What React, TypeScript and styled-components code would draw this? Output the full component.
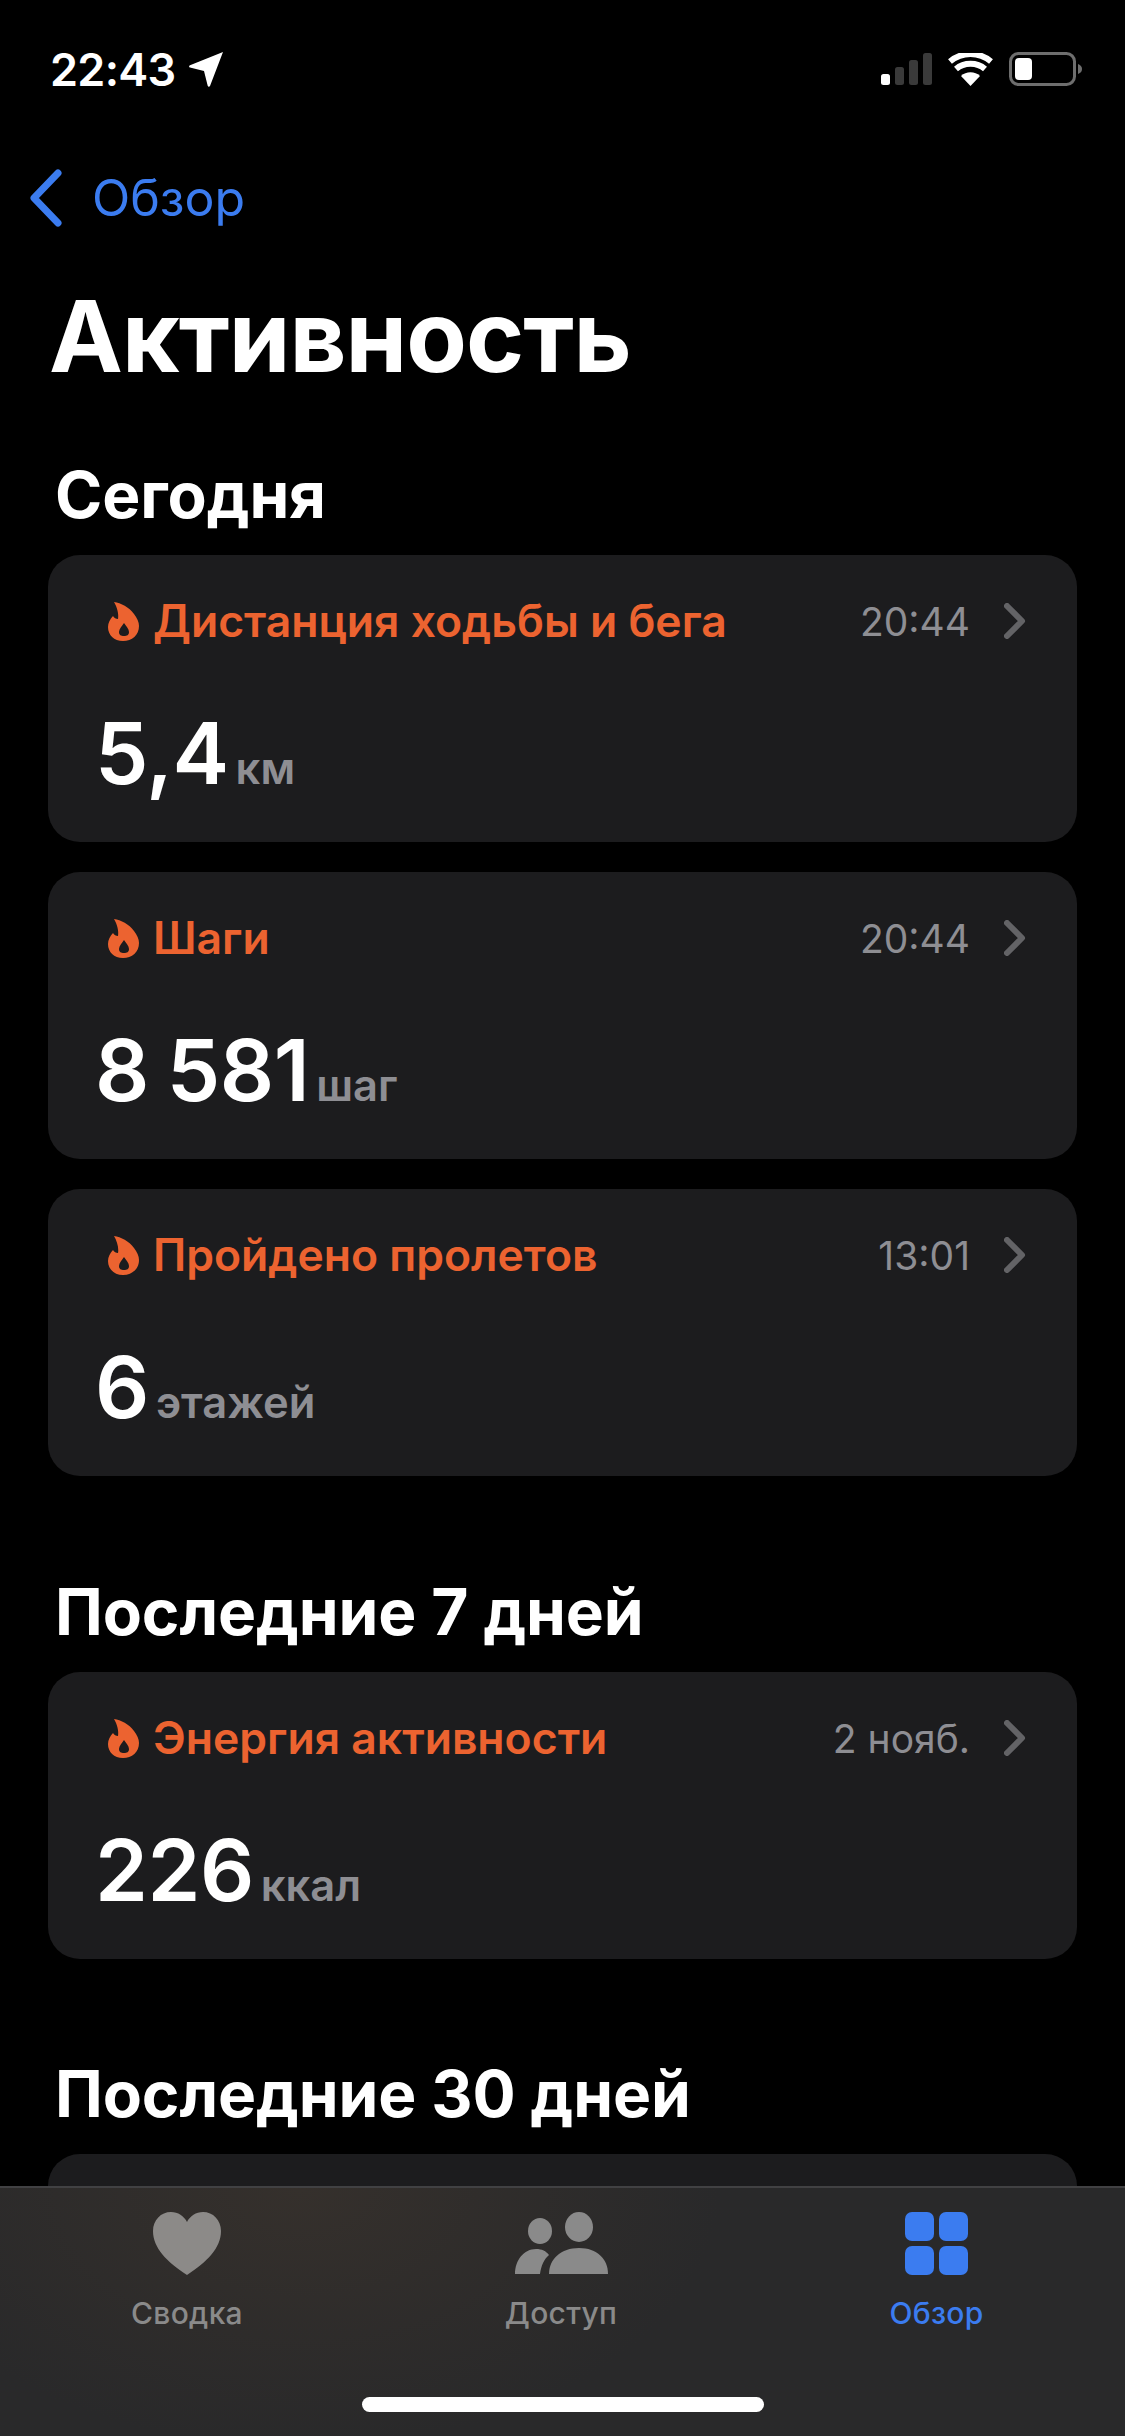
import React from 'react';
import styled, {createGlobalStyle} from 'styled-components';

const GlobalStyle = createGlobalStyle`
  html, body {
    margin: 0;
    padding: 0;
    background: #000;
  }
  * {
    box-sizing: border-box;
  }
`;

const Screen = styled.div`
  position: relative;
  width: 1125px;
  height: 2436px;
  overflow: hidden;
  background: #000;
  color: #fff;
  font-family: Inter, 'Noto Sans', sans-serif;
`;

const StatusBar = styled.div`
  display: flex;
  align-items: center;
  justify-content: space-between;
  height: 44px;
  margin-top: 47px;
  padding: 0 43px 0 50px;
`;

const Clock = styled.div`
  display: flex;
  align-items: center;
  gap: 12px;
  font-size: 45px;
  font-weight: 600;
  letter-spacing: -0.7px;
`;

const StatusIcons = styled.div`
  display: flex;
  align-items: center;
  gap: 16px;
`;

const BackLink = styled.div`
  display: flex;
  align-items: center;
  gap: 29px;
  height: 60px;
  margin-top: 77px;
  padding-left: 28px;
  color: #3b7cf0;
  font-size: 50px;
`;

const Title = styled.h1`
  margin: 48px 0 0 49px;
  font-size: 99px;
  line-height: 120px;
  font-weight: 700;
  letter-spacing: -1px;
`;

const SectionTitle = styled.h2`
  margin: 0 0 0 55px;
  font-size: 64px;
  line-height: 72px;
  font-weight: 700;
  letter-spacing: -0.1px;
`;

const Section = styled.section<{$gap: number}>`
  margin-top: ${p => p.$gap}px;
`;

const CardList = styled.div`
  display: flex;
  flex-direction: column;
  gap: 30px;
  margin: 24px 48px 0;
`;

const Card = styled.div`
  height: 287px;
  padding: 40px 51px 0 47px;
  border-radius: 32px;
  background: #1c1c1e;
`;

const CardHead = styled.div`
  display: flex;
  align-items: center;
  height: 52px;
  padding-left: 13px;
`;

const CardLabel = styled.div`
  flex: 1;
  margin-left: 14px;
  color: #ec6330;
  font-size: 44.5px;
  font-weight: 600;
`;

const CardTime = styled.div`
  margin-right: 34px;
  color: #8e8e93;
  font-size: 39px;
`;

const Reading = styled.div`
  display: flex;
  align-items: baseline;
  gap: 7px;
  margin-top: 57px;
`;

const Value = styled.span`
  font-size: 85px;
  font-weight: 600;
  line-height: 100px;
  letter-spacing: -0.5px;
  word-spacing: -3px;
`;

const Unit = styled.span`
  color: #8e8e93;
  font-size: 43.5px;
  font-weight: 600;
`;

const TabBar = styled.nav`
  position: absolute;
  left: 0;
  right: 0;
  bottom: 0;
  display: grid;
  grid-template-columns: 374px 374px 377px;
  height: 250px;
  padding-top: 24px;
  border-top: 2px solid #414143;
  background: radial-gradient(ellipse 420px 260px at 300px 0, #35302c, transparent), #29292a;
`;

const TabItem = styled.div<{$active?: boolean}>`
  display: flex;
  flex-direction: column;
  align-items: center;
  gap: 20px;
  color: ${p => (p.$active ? '#3b7cf0' : '#8a8a8a')};
  font-size: 30px;
  font-weight: 500;
  letter-spacing: 0.3px;
`;

const HomeIndicator = styled.div`
  position: absolute;
  left: 362px;
  bottom: 24px;
  width: 402px;
  height: 15px;
  border-radius: 8px;
  background: #fff;
`;

const Flame = () => (
  <svg width="31" height="39" viewBox="0 0 31 39">
    <path
      fill="#ec6330"
      fillRule="evenodd"
      d="M6 0c7 1 15 5 20 12 3 4 5 8 5 12 0 9-7 15-16 15S0 33 0 25c0-4 2-8 5-11 1 2 3 3 5 3 1-5-1-12-4-17zM16 21c-2 3-5 6-5 9 0 3 2 4 5 4s5-1 5-4c0-3-3-6-5-9z"
    />
  </svg>
);

const Chevron = () => (
  <svg width="22" height="36" viewBox="0 0 22 36">
    <path d="M3 3l15 15L3 33" fill="none" stroke="#636366" strokeWidth="6" strokeLinecap="round" strokeLinejoin="round" />
  </svg>
);

const SignalIcon = () => (
  <svg width="51" height="32" viewBox="0 0 51 32">
    <rect x="0" y="21" width="9" height="11" rx="2.5" fill="#fff" />
    <rect x="14" y="14" width="9" height="18" rx="2.5" fill="#3a3a3a" />
    <rect x="28" y="7" width="9" height="25" rx="2.5" fill="#3a3a3a" />
    <rect x="42" y="0" width="9" height="32" rx="2.5" fill="#3a3a3a" />
  </svg>
);

const WifiIcon = () => (
  <svg width="45" height="33" viewBox="0 0 45 33">
    <path d="M22.500 33L13 23c5-5 14-5 19 0z" fill="#fff" />
    <path d="M8 16c8-7 21-7 29 0" fill="none" stroke="#fff" strokeWidth="6" />
    <path d="M2 8.500c12-10 29-10 41 0" fill="none" stroke="#fff" strokeWidth="6" />
  </svg>
);

const BatteryIcon = () => (
  <svg width="73" height="34" viewBox="0 0 73 34">
    <rect x="1.500" y="1.500" width="64" height="31" rx="8" fill="none" stroke="#6e6e6e" strokeWidth="3" />
    <rect x="6" y="6" width="17" height="22" rx="4" fill="#fff" />
    <path d="M69 12c3 1 4 3 4 5s-1 4-4 5z" fill="#6e6e6e" />
  </svg>
);

const LocationIcon = () => (
  <svg width="36" height="36" viewBox="0 0 36 36">
    <path d="M35 1L22 35c-.500 1-2 1-2.300-.200L16 20 2 16.500c-1.200-.300-1.200-1.800 0-2.300z" fill="#fff" />
  </svg>
);

const BackIcon = () => (
  <svg width="35" height="58" viewBox="0 0 35 58">
    <path d="M30 4L6 29l24 25" fill="none" stroke="#3b7cf0" strokeWidth="7" strokeLinecap="round" strokeLinejoin="round" />
  </svg>
);

const HeartIcon = () => (
  <svg width="68" height="63" viewBox="0 0 68 63">
    <path
      fill="#8c8a88"
      d="M34 63C14 50 0 36 0 19 0 8 8 0 18 0c7 0 13 4 16 10C37 4 43 0 50 0c10 0 18 8 18 19 0 17-14 31-34 44z"
    />
  </svg>
);

const PeopleIcon = () => (
  <svg width="93" height="63" viewBox="0 0 93 63">
    <g fill="#8a8a8a">
      <ellipse cx="25" cy="19" rx="12" ry="13" />
      <ellipse cx="64" cy="15" rx="14" ry="15" />
      <path d="M0 62c0-14 9-25 21-25 6 0 10 2 13 6-5 4-8 11-9 19z" />
      <path d="M34 62c0-15 12-26 30-26s29 11 29 26z" />
    </g>
  </svg>
);

const GridIcon = () => (
  <svg width="63" height="63" viewBox="0 0 63 63">
    <g fill="#3b7cf0">
      <rect x="0" y="0" width="29" height="29" rx="7" />
      <rect x="34" y="0" width="29" height="29" rx="7" />
      <rect x="0" y="34" width="29" height="29" rx="7" />
      <rect x="34" y="34" width="29" height="29" rx="7" />
    </g>
  </svg>
);

type Metric = {label: string; time: string; value: string; unit: string};

const today: Metric[] = [
  {label: 'Дистанция ходьбы и бега', time: '20:44', value: '5,4', unit: 'км'},
  {label: 'Шаги', time: '20:44', value: '8 581', unit: 'шаг'},
  {label: 'Пройдено пролетов', time: '13:01', value: '6', unit: 'этажей'},
];

const week: Metric[] = [
  {label: 'Энергия активности', time: '2 нояб.', value: '226', unit: 'ккал'},
];

const MetricCard = ({label, time, value, unit}: Metric) => (
  <Card>
    <CardHead>
      <Flame />
      <CardLabel>{label}</CardLabel>
      <CardTime>{time}</CardTime>
      <Chevron />
    </CardHead>
    <Reading>
      <Value>{value}</Value>
      <Unit>{unit}</Unit>
    </Reading>
  </Card>
);

export default function App() {
  return (
    <Screen>
      <GlobalStyle />
      <StatusBar>
        <Clock>
          22:43
          <LocationIcon />
        </Clock>
        <StatusIcons>
          <SignalIcon />
          <WifiIcon />
          <BatteryIcon />
        </StatusIcons>
      </StatusBar>
      <BackLink>
        <BackIcon />
        Обзор
      </BackLink>
      <Title>Активность</Title>
      <Section $gap={63}>
        <SectionTitle>Сегодня</SectionTitle>
        <CardList>
          {today.map(m => (
            <MetricCard key={m.label} {...m} />
          ))}
        </CardList>
      </Section>
      <Section $gap={100}>
        <SectionTitle>Последние 7 дней</SectionTitle>
        <CardList>
          {week.map(m => (
            <MetricCard key={m.label} {...m} />
          ))}
        </CardList>
      </Section>
      <Section $gap={99}>
        <SectionTitle>Последние 30 дней</SectionTitle>
        <CardList>
          <Card />
        </CardList>
      </Section>
      <TabBar>
        <TabItem>
          <HeartIcon />
          Сводка
        </TabItem>
        <TabItem>
          <PeopleIcon />
          Доступ
        </TabItem>
        <TabItem $active>
          <GridIcon />
          Обзор
        </TabItem>
      </TabBar>
      <HomeIndicator />
    </Screen>
  );
}
